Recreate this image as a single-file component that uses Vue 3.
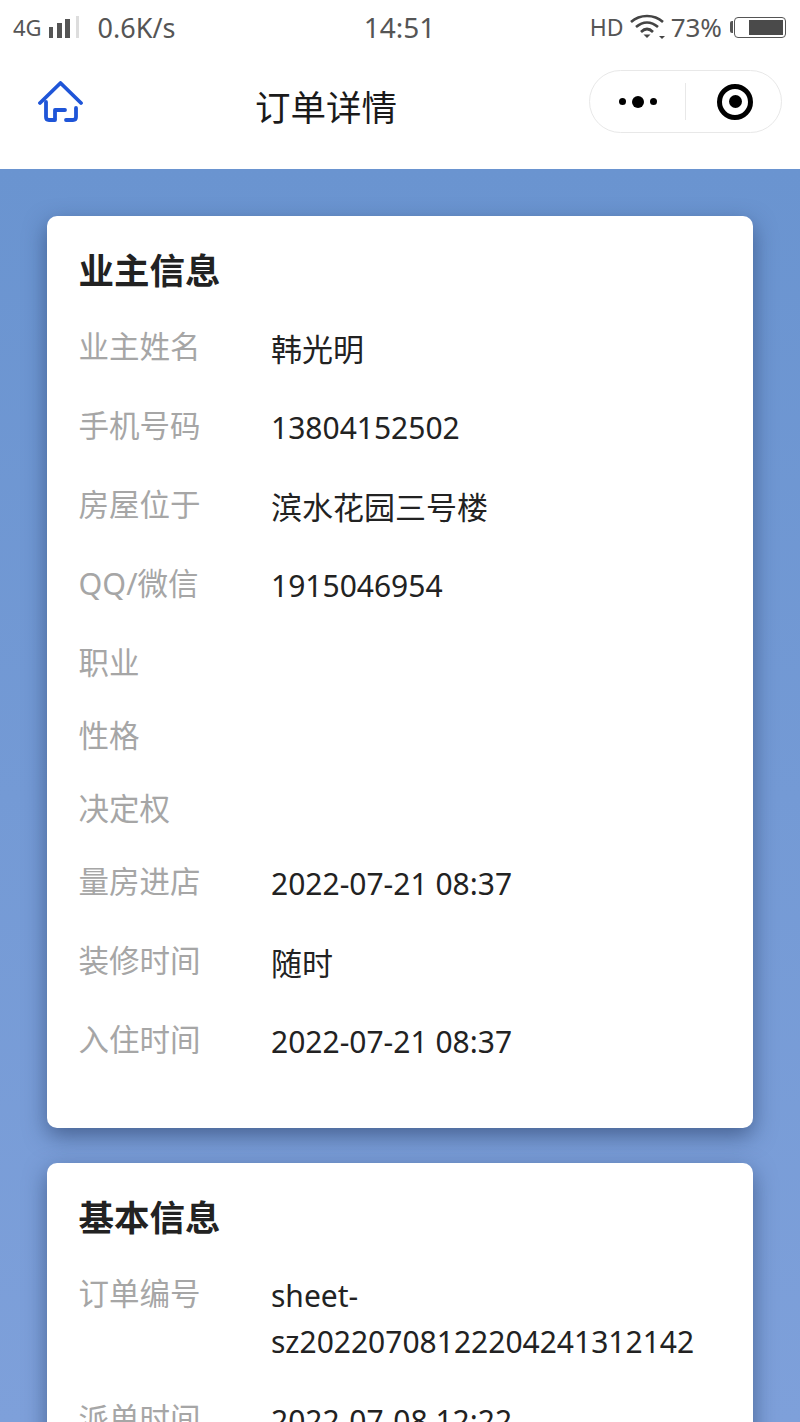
<template>
  <div class="page">
    <div class="status">
      <div class="status-left">
        <span class="net">4G</span>
        <svg class="signal" width="32" height="22" viewBox="0 0 32 22">
          <rect x="1" y="11" width="4" height="11" fill="#555" />
          <rect x="9" y="7" width="5" height="15" fill="#555" />
          <rect x="17" y="3" width="5" height="19" fill="#555" />
          <rect x="28" y="0" width="3" height="22" fill="#ddd" />
        </svg>
        <span class="speed">0.6K/s</span>
      </div>
      <div class="clock">14:51</div>
      <div class="status-right">
        <span class="hd">HD</span>
        <svg class="wifi" width="36" height="26" viewBox="0 0 36 26">
          <path d="M1 8 C10 0 24 0 33 8" fill="none" stroke="#444" stroke-width="2.6" />
          <path d="M6 13 C13 7 21 7 28 13" fill="none" stroke="#444" stroke-width="2.6" />
          <path d="M11 18 C15 14 19 14 23 18" fill="none" stroke="#444" stroke-width="2.6" />
          <path d="M13.5 20.5 L20.5 20.5 L17 24 Z" fill="#444" />
          <path d="M29 22 L35 22 L32 25 Z" fill="#444" />
        </svg>
        <span class="pct">73%</span>
        <div class="battery-cap"></div>
        <div class="battery"><div class="battery-fill"></div></div>
      </div>
    </div>

    <div class="nav">
      <svg class="home" width="46" height="44" viewBox="0 0 46 44">
        <path d="M2 22 L22.5 2 L43 22" fill="none" stroke="#1f55d8" stroke-width="3.8" stroke-linecap="round" stroke-linejoin="round" />
        <path d="M8 21 V36 Q8 39 11 39 H17 V29 H27 M38 27 V36 Q38 39 35 39 H28" fill="none" stroke="#1f55d8" stroke-width="3.8" stroke-linecap="round" stroke-linejoin="round" />
      </svg>
      <div class="title">订单详情</div>
      <div class="capsule">
        <div class="dots">
          <i class="dot"></i><i class="dot big"></i><i class="dot"></i>
        </div>
        <div class="divider"></div>
        <div class="target"><i></i></div>
      </div>
    </div>

    <div class="content">
      <div class="card" v-for="card in cards" :key="card.title">
        <h2>{{ card.title }}</h2>
        <div class="row" v-for="row in card.rows" :key="row.label">
          <div class="label">{{ row.label }}</div>
          <div class="value" :class="{ latin: isLatin(row.value) }">{{ row.value }}</div>
        </div>
      </div>
    </div>
  </div>
</template>

<script setup>
const cards = [
  {
    title: '业主信息',
    rows: [
      { label: '业主姓名', value: '韩光明' },
      { label: '手机号码', value: '13804152502' },
      { label: '房屋位于', value: '滨水花园三号楼' },
      { label: 'QQ/微信', value: '1915046954' },
      { label: '职业', value: '' },
      { label: '性格', value: '' },
      { label: '决定权', value: '' },
      { label: '量房进店', value: '2022-07-21 08:37' },
      { label: '装修时间', value: '随时' },
      { label: '入住时间', value: '2022-07-21 08:37' }
    ]
  },
  {
    title: '基本信息',
    rows: [
      { label: '订单编号', value: 'sheet-sz20220708122204241312142' },
      { label: '派单时间', value: '2022-07-08 12:22' }
    ]
  }
]

const isLatin = (text) => /^[\x20-\x7e]+$/.test(text)
</script>

<style>
html,
body {
  margin: 0;
  overflow: hidden;
}
</style>

<style scoped>
.page {
  width: 800px;
  height: 1422px;
  overflow: hidden;
  font-family: "Noto Sans", "Noto Sans CJK SC", sans-serif;
  background: #fff;
}

.status {
  height: 54px;
  padding: 0 14px 0 13px;
  display: flex;
  align-items: center;
  justify-content: space-between;
  color: #555;
  box-sizing: border-box;
}

.status-left,
.status-right {
  width: 205px;
  display: flex;
  align-items: center;
}

.status-right {
  justify-content: flex-end;
}

.net {
  font-size: 22px;
}

.signal {
  margin-left: 6px;
}

.speed {
  margin-left: 18px;
  font-size: 27px;
}

.clock {
  font-size: 28px;
}

.hd {
  font-size: 23px;
}

.pct {
  font-size: 26px;
}

.wifi {
  margin: 0 5px 0 6px;
}

.battery-cap {
  flex: none;
  width: 3px;
  height: 12px;
  margin-left: 8px;
  background: #555;
  border-radius: 2px 0 0 2px;
}

.battery {
  flex: none;
  width: 52px;
  height: 21px;
  margin-left: 1px;
  padding: 2px;
  border: 1.5px solid #555;
  border-radius: 4px;
  display: flex;
  justify-content: flex-end;
  box-sizing: border-box;
}

.battery-fill {
  width: 34px;
  background: #4a4a4a;
}

.nav {
  height: 115px;
  padding: 0 18px 0 38px;
  display: flex;
  align-items: flex-start;
  position: relative;
  box-sizing: border-box;
}

.home {
  margin-top: 27px;
}

.title {
  position: absolute;
  left: 255px;
  top: 29px;
  font-size: 35.5px;
  line-height: 48px;
  color: #1a1a1a;
}

.capsule {
  margin-left: auto;
  margin-top: 16px;
  width: 193px;
  height: 63px;
  border: 1px solid #e8e8e8;
  border-radius: 32px;
  display: flex;
  align-items: center;
  box-sizing: border-box;
}

.dots {
  width: 95px;
  display: flex;
  align-items: center;
  justify-content: center;
  gap: 6px;
}

.dot {
  width: 7px;
  height: 7px;
  border-radius: 50%;
  background: #000;
}

.dot.big {
  width: 12px;
  height: 12px;
}

.divider {
  width: 1px;
  height: 37px;
  background: #e8e8e8;
}

.target {
  flex: 1;
  display: flex;
  justify-content: center;
  padding-left: 3px;
}

.target i {
  width: 36px;
  height: 36px;
  border: 5px solid #000;
  border-radius: 50%;
  box-sizing: border-box;
  display: flex;
  align-items: center;
  justify-content: center;
}

.target i::after {
  content: "";
  width: 13px;
  height: 13px;
  border-radius: 50%;
  background: #000;
}

.content {
  height: 1253px;
  padding: 47px 47px 0;
  display: flex;
  flex-direction: column;
  gap: 35px;
  background: linear-gradient(#6a94d0, #7ea0da);
  box-sizing: border-box;
}

.card {
  flex: none;
  padding: 29px 32px 30px 31.5px;
  background: #fff;
  border-radius: 10px;
  box-shadow: 0 8px 22px rgba(30, 50, 90, 0.55);
}

h2 {
  margin: 0 0 31px;
  font-size: 35.5px;
  line-height: 50px;
  font-weight: 700;
  color: #222;
}

.row {
  display: flex;
  padding-bottom: 33px;
}

.label {
  width: 192.5px;
  flex: none;
  font-size: 30.5px;
  line-height: 40px;
  color: #a6a6a6;
}

.value {
  flex: 1;
  min-width: 0;
  font-size: 31px;
  line-height: 46px;
  color: #222;
}

.value.latin {
  font-size: 30px;
}
</style>
